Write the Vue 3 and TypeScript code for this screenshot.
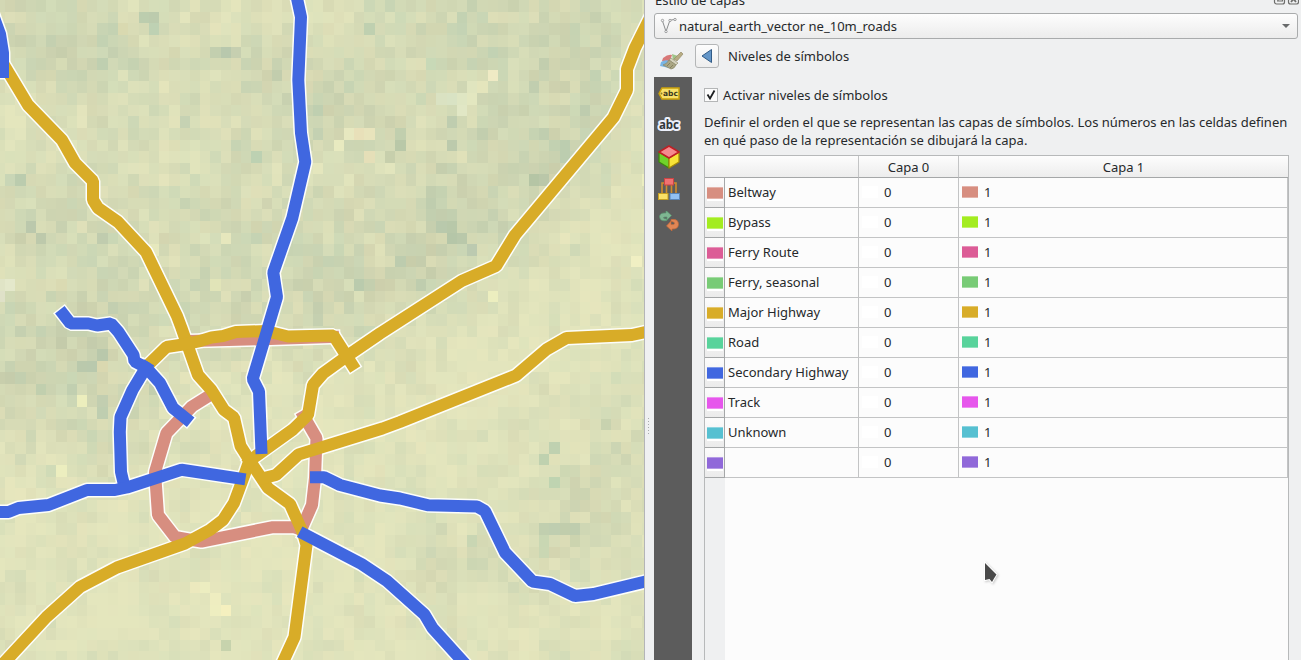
<script setup lang="ts">
interface SymbolRow { name: string; color: string }
interface Road { d: string; kind: 'belt' | 'major' | 'secondary' }
interface Cell { x: number; y: number; w: number; h: number; fill: string }

const rows: SymbolRow[] = [
  { name: 'Beltway', color: '#d78e80' },
  { name: 'Bypass', color: '#a3ec20' },
  { name: 'Ferry Route', color: '#dc5c96' },
  { name: 'Ferry, seasonal', color: '#78cb76' },
  { name: 'Major Highway', color: '#d8ac28' },
  { name: 'Road', color: '#58d39b' },
  { name: 'Secondary Highway', color: '#4067e0' },
  { name: 'Track', color: '#e656ec' },
  { name: 'Unknown', color: '#56c0d1' },
  { name: '', color: '#9068d9' },
]

const roads: Road[] = [
  { kind: 'belt', d: 'M188 341L270 339L333 337' },
  { kind: 'belt', d: 'M212 394L192 406.5L166.5 433L155 472L158 515L175 537L201.500 541.700L271.700 527.300L298 527.300' },
  { kind: 'belt', d: 'M304 416.500L316.500 438L315 478L312 505L301 530' },
  { kind: 'major', d: 'M-8 45L7 70L28 105L62 140L75 163L93 181V200L98 208L118 222L146 252L177 316L181.500 328L198 375L211 389.500L224 410L234 417.500L240.500 446L250 461L264 482L268 488L290 504L303 533L306.500 545L294.500 637L283 662' },
  { kind: 'major', d: 'M250 459L244 476L234 503L223 520L210 530L185 543.500L117 567.500L80 587L46.500 617L2 665' },
  { kind: 'major', d: 'M250 461L256 456L293 429.500L308 415L313 385L323 373.500L350 354L380 333.500L461.700 281L496 266L515 235L613.500 117.500L627 90V69L635 48L650 18' },
  { kind: 'major', d: 'M264 478L276 475L298.500 454.500L382.500 428.500L400 422L516 375.500L546.500 349.500L566.500 338L632 335L650 331' },
  { kind: 'major', d: 'M147 366L166.500 347L183 344.500L200 341L211.500 337.500L223 336L236 332L266 331L288 336.500L333.500 335.500L352 364.500' },
  { kind: 'secondary', d: 'M-8 12L0 34L3 53V72' },
  { kind: 'secondary', d: 'M296.500 -4L301 17L298.300 80L301 133L305.300 162L292.300 218L273.300 272.500L277 297L252.700 379L259 391.500L261.300 448' },
  { kind: 'secondary', d: 'M63.500 314.500L70.500 323.500H88.500L97 325.500L111 323.500L118.500 332L133.500 355L134.500 361.500L146 367.500L160 383L173 408L186 418.500' },
  { kind: 'secondary', d: 'M146 367.500L132.500 390L120.500 417L119.800 432L121 472L124.500 487' },
  { kind: 'secondary', d: 'M-8 512H8.500L18.500 508L48.500 505L87 490H115L127 487.500L181.500 469.700L239.500 478.500' },
  { kind: 'secondary', d: 'M316 477.200H324L340 485L380 495.500L400 498.500L428.500 505.300L477 506.500L485 511L505 552.500L532.500 581.500L550 584L575 596L593.500 594L650 580.500' },
  { kind: 'secondary', d: 'M305 534.500L361.500 564L387 581L424.500 614.500L432.500 628L466 665' },
]
const strokes = { belt: '#d78e80', major: '#d8ac28', secondary: '#4067e0' }

// Vegetation density sampled on a coarse grid, 0 = dry and bright, 9 = dense
const density = [
  '5 5 4 4 2 1 2 4 5 5 5 5 2',
  '5 6 5 4 4 6 3 4 5 6 6 6 2',
  '1 2 4 3 3 5 6 5 3 5 6 6 1',
  '3 3 3 3 4 3 3 3 6 5 6 4 1',
  '5 5 4 4 4 5 4 4 8 6 4 1 1',
  '2 5 5 4 5 4 6 5 7 3 1 1 1',
  '5 7 6 4 4 4 5 4 1 1 1 1 1',
  '7 6 6 2 1 1 1 1 2 1 1 1 1',
  '3 2 5 2 1 1 1 1 1 1 1 3 5',
  '1 1 1 1 1 1 1 1 1 1 3 5 3',
  '1 1 1 2 0 0 1 1 4 2 4 3 1',
  '1 1 0 0 0 0 1 1 3 1 1 1 1',
  '3 1 2 0 1 1 1 1 1 1 1 1 2',
].map((line) => line.split(' ').map(Number))

// Single raster cells that stand out, as column, row and colour
const accents: [number, number, string][] = [
  [14, 1, '#bccdae'], [15, 1, '#bccbad'], [15, 2, '#bed1b3'], [12, 2, '#d9d9b0'], [22, 4, '#b8c8ad'], [21, 4, '#c3cfaf'], [23, 4, '#c6cfb0'],
  [25, 13, '#bdd1b2'], [18, 10, '#c6d2b3'], [2, 15, '#bbccae'], [1, 15, '#c9d6b6'], [3, 19, '#bbc8ac'], [4, 20, '#bdc9ab'], [10, 20, '#c0ccae'],
  [22, 20, '#e6e7bd'], [15, 21, '#e6e8bd'], [1, 24, '#e4e8cb'], [0, 24, '#e0e4c6'], [0, 25, '#dfe1c8'], [21, 24, '#e1e4b8'], [6, 24, '#dadab2'],
  [36, 2, '#bfd0b0'], [42, 5, '#c8d9b7'], [48, 6, '#efeac4'], [47, 7, '#e4e5bc'], [46, 8, '#e3e7c0'], [45, 9, '#e1e7c5'], [46, 7, '#e0e5bf'], [45, 8, '#dfe6c3'], [44, 8, '#d9e3c4'], [43, 8, '#dae2c2'],
  [39, 11, '#c1cfae'], [39, 12, '#b9c8a8'], [38, 13, '#c7cfac'], [33, 12, '#e8eac0'], [34, 11, '#e7e8c0'], [35, 11, '#e8e0b9'], [36, 11, '#e8e4bc'], [36, 13, '#e5dfb8'],
  [44, 12, '#bccaac'], [44, 10, '#bfcdaf'], [55, 13, '#bccdaf'], [55, 12, '#bccdaf'], [54, 12, '#c2d1b1'], [52, 15, '#b5c5a5'], [53, 15, '#bac7a9'], [63, 15, '#eceec0'],
  [44, 19, '#b8c8a9'], [43, 19, '#b9c9ac'], [45, 20, '#b9c8aa'], [44, 20, '#b5c6a8'], [46, 21, '#bccab0'], [39, 22, '#bdccae'], [62, 22, '#f0efc3'],
  [35, 24, '#bacbad'], [48, 25, '#eceebf'], [10, 31, '#dad8b0'], [8, 34, '#eceebd'], [2, 28, '#c5d0b0'], [4, 33, '#c1cfae'], [9, 31, '#b9c9ad'],
  [10, 30, '#b9c8ab'], [8, 31, '#bac9ac'], [15, 33, '#c2ceae'], [10, 35, '#bfceb0'], [10, 34, '#c2ceb0'], [6, 40, '#eceebf'],
  [54, 38, '#bfd1b0'], [65, 37, '#c5d1ae'], [59, 36, '#c8d2af'], [53, 39, '#bfd1af'], [55, 45, '#c1cdac'], [56, 45, '#bfcdae'], [56, 46, '#ccd4af'],
  [53, 45, '#c1cfaf'], [54, 45, '#bfceb0'], [53, 46, '#c9d7b3'], [53, 47, '#cad7b3'], [54, 41, '#bfd4b1'], [55, 40, '#ced8b3'],
  [19, 50, '#ece9be'], [20, 50, '#ecedc0'], [21, 51, '#eeedc0'], [22, 52, '#f5f0bf'], [21, 52, '#eeeec0'], [13, 57, '#c6d2af'], [22, 55, '#c7d3ad'], [46, 46, '#c9d6b3'],
]

function hash(x: number, y: number, salt: number): number {
  let n = Math.imul(x + 11, 374761393) ^ Math.imul(y + 7, 668265263) ^ Math.imul(salt, 1442695041)
  n = Math.imul(n ^ (n >>> 13), 1274126177)
  return ((n ^ (n >>> 16)) >>> 0) / 4294967295
}

function mix(a: number[], b: number[], t: number): number[] {
  return a.map((v, i) => v + (b[i] - v) * t)
}

function densityAt(x: number, y: number): number {
  const gx = Math.min(11.99, Math.max(0, x / 53.7))
  const gy = Math.min(11.99, Math.max(0, y / 55))
  const ix = Math.floor(gx), iy = Math.floor(gy), fx = gx - ix, fy = gy - iy
  const top = density[iy][ix] * (1 - fx) + density[iy][ix + 1] * fx
  const bottom = density[iy + 1][ix] * (1 - fx) + density[iy + 1][ix + 1] * fx
  return (top * (1 - fy) + bottom * fy) / 9
}

const cells: Cell[] = []
const edgeX = (c: number) => (c === 0 ? 0 : Math.round(5 + (c - 1) * 10.27))
const edgeY = (r: number) => Math.round(r * 11.63)
for (let r = 0; r < 57; r++) {
  for (let c = 0; c < 64; c++) {
    const x = edgeX(c), y = edgeY(r)
    const base = densityAt(x, y)
    const soft = (hash(c >> 1, r >> 1, 3) + hash((c + 1) >> 1, (r + 1) >> 1, 5)) / 2 - 0.5
    const t = Math.min(1, Math.max(0, base * 0.95 + soft * 0.45 + (hash(c, r, 1) - 0.5) * (0.2 + base * 0.4)))
    const hue = hash(c, r, 9) * 0.55 + hash(c >> 1, r >> 2, 12) * 0.45
    const light = mix([231, 230, 189], [224, 229, 189], hue)
    const dark = mix([200, 202, 167], [184, 204, 176], hue)
    const rgb = mix(light, dark, t).map(Math.round)
    cells.push({ x, y, w: edgeX(c + 1) - x, h: edgeY(r + 1) - y, fill: `rgb(${rgb.join(',')})` })
  }
}
for (const [c, r, fill] of accents) {
  if (c < 64 && r < 57) cells[r * 64 + c].fill = fill
}
</script>

<template>
  <div class="window">
    <svg class="map" width="644" height="660" viewBox="0 0 644 660">
      <g shape-rendering="crispEdges">
        <rect v-for="(c, i) in cells" :key="i" :x="c.x" :y="c.y" :width="c.w" :height="c.h" :fill="c.fill" />
      </g>
      <g fill="none" stroke-linecap="square" stroke-linejoin="bevel">
        <path v-for="(road, i) in roads" :key="'c' + i" :d="road.d" stroke="#fdfefb" stroke-width="15" />
        <path v-for="(road, i) in roads" :key="'f' + i" :d="road.d" :stroke="strokes[road.kind]" stroke-width="12" />
      </g>
    </svg>

    <div class="splitter"><i v-for="n in 6" :key="n" /></div>

    <section class="dock">
      <header class="dock-title">
        <span>Estilo de capas</span>
        <svg width="26" height="14" viewBox="0 0 26 14" fill="none" stroke="#6e6e6c" stroke-width="1.200">
          <rect x="1.500" y="3" width="10" height="10" rx="2" />
          <path d="M5 10V5.500H9.500V10H4" />
          <rect x="15.500" y="3" width="10" height="10" rx="2" />
          <path d="M18 11L20.500 8L23 11M18 5L20.500 8L23 5" stroke-width="1.800" />
        </svg>
      </header>

      <div class="combo">
        <svg width="18" height="18" viewBox="0 0 18 18" fill="none" stroke="#8b8d8e">
          <path d="M2.500 4L6 14.500L9.500 4.500Q10.500 2.500 14.500 2.500" />
          <g fill="#f6f6f6" stroke-width=".8"><circle cx="2.500" cy="3.500" r="1.200" /><circle cx="6" cy="14.500" r="1.200" /><circle cx="10" cy="3.500" r="1.200" /><circle cx="15" cy="2.500" r="1.200" /></g>
        </svg>
        <span>natural_earth_vector ne_10m_roads</span>
        <svg class="arrow" width="8" height="4" viewBox="0 0 8 4"><path d="M0 0H8L4 4Z" fill="#686a6b" /></svg>
      </div>

      <div class="body">
        <nav class="side">
          <div class="tab current">
            <svg width="24" height="20" viewBox="0 0 24 20">
              <path d="M3 7Q8 3 12 4L9 13L2 10Z" fill="#d87878" />
              <path d="M1 11Q5 8 10 10L9 17L0 15Z" fill="#79b5e5" />
              <path d="M12 3L18 5L13 10Z" fill="#9fc488" />
              <path d="M14 8L21 1L23 3L17 10Z" fill="#b7ac83" stroke="#978d6c" stroke-width=".7" />
              <path d="M11 7L18 12L16 14L9 9Z" fill="#d4d1bc" stroke="#989376" stroke-width=".7" />
              <path d="M9 9L16 14Q14 18 11 18L3 14Q7 13 9 9Z" fill="#aaa684" stroke="#8a8668" stroke-width=".7" />
              <path d="M10 12L7 15M13 14L10 17" stroke="#86815f" />
            </svg>
          </div>
          <div class="tab">
            <svg width="22" height="13" viewBox="0 0 22 13">
              <path d="M1 6.500L4 1H21V12H4Z" fill="#f7e169" stroke="#caa10b" stroke-width="1.500" />
              <circle cx="3.500" cy="6.500" r="1" fill="#8a7a24" />
              <text x="5" y="9.300" class="tag">abc</text>
            </svg>
          </div>
          <div class="tab raised">
            <svg width="24" height="15" viewBox="0 0 24 15"><text x="12" y="11.500" text-anchor="middle" class="halo">abc</text></svg>
          </div>
          <div class="tab">
            <svg width="22" height="24" viewBox="0 0 22 24" stroke-linejoin="round">
              <path d="M1 7L11 13V23L1 17Z" fill="#70d22a" stroke="#3c8610" stroke-width="1.300" />
              <path d="M11 13L21 7V17L11 23Z" fill="#f7e437" stroke="#a58b08" stroke-width="1.300" />
              <path d="M11 1L21 7L11 13L1 7Z" fill="#f58a8e" stroke="#bf1f24" stroke-width="1.500" />
            </svg>
          </div>
          <div class="tab">
            <svg width="22" height="24" viewBox="0 0 22 24">
              <path d="M4 17V6H18V17M8.500 7V16M13.500 7V16" fill="none" stroke="#d08c2c" stroke-width="1.600" />
              <rect x="6.500" y="1.500" width="9" height="6.500" fill="#f07272" stroke="#cb4545" />
              <rect x=".5" y="16.500" width="9.500" height="6" fill="#fbe067" stroke="#c7a022" />
              <rect x="12" y="16.500" width="9.500" height="6" fill="#91c1f2" stroke="#5a86b6" />
            </svg>
          </div>
          <div class="tab">
            <svg width="22" height="20" viewBox="0 0 22 20">
              <path d="M9 9.500Q2 11 1.500 5.500Q2 1.500 8 2V-.5L13.500 4.500L9 9V6Q5 5.500 5.500 7Q6 8 9 8Z" fill="#7fb692" stroke="#5a9570" stroke-width=".7" />
              <path d="M13 8.500Q20.500 7.500 20.500 13.500Q20 18.500 14 18V20L8.500 15L13 10V13.500Q17 14 16.500 12Q16 10.500 13 10.500Z" fill="#e08655" stroke="#c36838" stroke-width=".7" />
            </svg>
          </div>
        </nav>

        <main class="content">
          <div class="crumb">
            <button type="button" class="back" aria-label="Volver">
              <svg width="12" height="16" viewBox="0 0 12 16"><path d="M10.500 1.500V14.500L1 8Z" fill="#6496c8" stroke="#315b87" stroke-linejoin="round" /></svg>
            </button>
            <span>Niveles de símbolos</span>
          </div>

          <div class="check">
            <span class="box"><svg width="12" height="12" viewBox="0 0 12 12"><path d="M2.500 5.500L5 9.500L9.500 1.500" fill="none" stroke="#1e2022" stroke-width="1.800" /></svg></span>
            <span>Activar niveles de símbolos</span>
          </div>

          <p class="help">Definir el orden el que se representan las capas de símbolos. Los números en las celdas definen<br>en qué paso de la representación se dibujará la capa.</p>

          <div class="table">
            <div class="row head">
              <div class="corner"></div>
              <div class="c0">Capa 0</div>
              <div class="c1">Capa 1</div>
            </div>
            <div v-for="row in rows" :key="row.color" class="row">
              <div class="vh"><i class="swatch" :style="{ background: row.color }"></i></div>
              <div class="name">{{ row.name }}</div>
              <div class="c0"><i class="swatch blank"></i>0</div>
              <div class="c1"><i class="swatch" :style="{ background: row.color }"></i>1</div>
            </div>
            <div class="rest"><div class="gutter"></div></div>
          </div>
        </main>
      </div>
    </section>

    <svg class="cursor" width="16" height="24" viewBox="0 0 16 24">
      <path d="M2 2V19L6.500 18L9 21L11 17.500L13.500 13.500Z" fill="#4a4a4a" stroke="#fff" stroke-width="2" paint-order="stroke" />
    </svg>
  </div>
</template>

<style>
body { margin: 0; overflow: hidden; }
</style>

<style scoped>
* { box-sizing: border-box; }
.window {
  position: relative; display: flex; width: 1301px; height: 660px; overflow: hidden;
  background: #eff0f1; color: #26292b;
  font: 13px/18px "Noto Sans", sans-serif;
}
.map { display: block; flex: none; }
.splitter {
  flex: none; width: 10px; padding: 418px 0 0 3px; border-left: 1px solid #b4b5b7;
  display: flex; flex-direction: column; gap: 2px;
}
.splitter i { width: 1px; height: 1px; background: #a9abad; }
.dock { flex: none; width: 647px; height: 660px; display: flex; flex-direction: column; }
.dock-title { height: 13px; flex: none; display: flex; justify-content: space-between; align-items: flex-end; padding-left: 1px; overflow: hidden; }
.dock-title span { height: 22px; }
.dock-title svg { margin: 0 2px 8px 0; flex: none; }
.combo {
  flex: none; width: 644px; height: 26px; display: flex; align-items: center; gap: 1px; padding: 0 7px 0 5px;
  border: 1px solid #a9abac; border-radius: 3px; background: linear-gradient(#fdfdfd, #ececec);
}
.arrow { margin-left: auto; }
.body { flex: 1; display: flex; min-height: 0; }
.side { flex: none; width: 38px; background: #5c5c5c; display: flex; flex-direction: column; }
.tab { height: 32px; display: flex; align-items: center; justify-content: center; padding-right: 8px; }
.tab.current { height: 38px; background: #eff0f1; padding: 6px 2px 0 0; }
.tab.raised { padding-bottom: 2px; }
.tag { font: bold 7.500px "DejaVu Sans", sans-serif; fill: #3c3920; }
.halo { font: bold 11.500px "Noto Sans", sans-serif; fill: #33373b; stroke: #eceffb; stroke-width: 4px; paint-order: stroke; stroke-linejoin: round; }
.content { flex: none; width: 609px; display: flex; flex-direction: column; padding: 5px 12px 0 12px; }
.crumb { display: flex; align-items: center; gap: 9px; height: 24px; margin-left: -9px; }
.back {
  width: 24px; height: 24px; padding: 0; display: flex; align-items: center; justify-content: center;
  border: 1px solid #b4b6b7; border-radius: 3px; background: linear-gradient(#fdfdfd, #ededed);
}
.check { display: flex; align-items: center; gap: 5px; height: 18px; margin-top: 18px; }
.box { width: 14px; height: 14px; border: 1px solid #b4b6b7; background: #fcfcfc; display: flex; }
.help { margin: 9px 0 0; white-space: nowrap; }
.table { margin-top: 6px; width: 585px; flex: 1; display: flex; flex-direction: column; border: 1px solid #b7b9ba; border-bottom: 0; background: #fcfcfc; }
.row { display: flex; height: 30px; flex: none; }
.row > div { display: flex; align-items: center; padding-bottom: 2px; border-right: 1px solid #c3c4c5; border-bottom: 1px solid #c3c4c5; }
.row.head { height: 22px; background: linear-gradient(#fdfdfd, #ececec); }
.row.head > div { justify-content: center; padding: 0; border-bottom-color: #a5a7a8; }
.row.head > .c1 { border-right: 0; }
.corner { width: 154px; }
.row > .vh { width: 20px; padding: 0 0 0 2px; border-color: #a5a7a8; background: linear-gradient(#fcfcfc, #ebebeb); }
.name { width: 134px; padding-left: 3px; }
.c0 { width: 100px; padding-left: 3px; }
.c1 { flex: 1; padding-left: 3px; }
.swatch { width: 16px; height: 12px; margin: 1px 6px 0 0; flex: none; border: solid #ffffff55; border-width: 1px 0; }
.vh .swatch { margin: 1px 0 0; box-shadow: 0 2px #fff; }
.blank { background: #fff; }
.rest { flex: 1; display: flex; }
.gutter { width: 20px; background: #eff0f1; }
.cursor { position: absolute; left: 983px; top: 561px; filter: drop-shadow(1px 1px 1px #0003); }
</style>
